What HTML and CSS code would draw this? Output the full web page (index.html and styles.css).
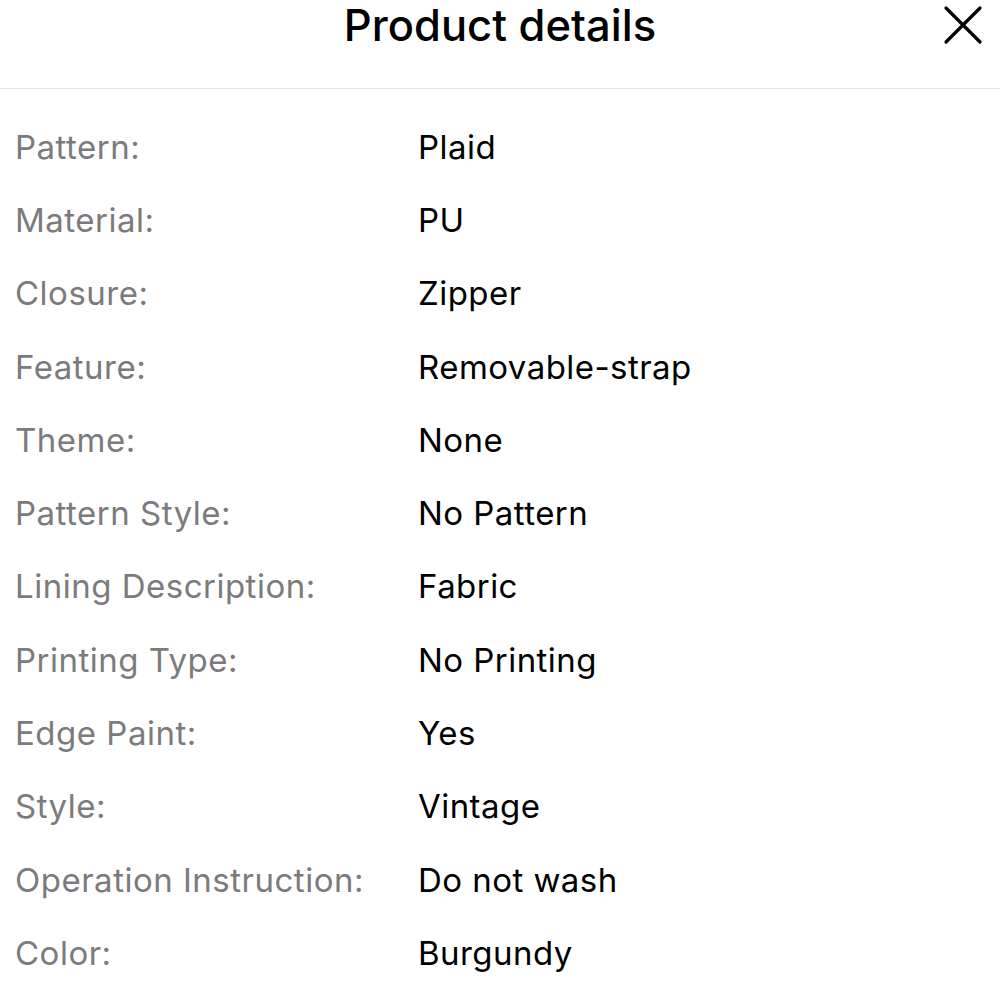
FILE: index.html
```html
<!DOCTYPE html>
<html>
<head>
<meta charset="utf-8">
<link rel="stylesheet" href="styles.css">
</head>
<body>
<div class="sheet">
  <header class="header">
    <h1 class="title">Product details</h1>
    <button class="close" aria-label="Close">
      <svg width="40" height="40" viewBox="0 0 40 40"><path d="M3 3 L37 37 M37 3 L3 37" stroke="#000" stroke-width="3.2" stroke-linecap="round" fill="none"/></svg>
    </button>
  </header>
  <dl class="details">
    <div class="row"><dt>Pattern:</dt><dd>Plaid</dd></div>
    <div class="row"><dt>Material:</dt><dd>PU</dd></div>
    <div class="row"><dt>Closure:</dt><dd>Zipper</dd></div>
    <div class="row"><dt>Feature:</dt><dd>Removable-strap</dd></div>
    <div class="row"><dt>Theme:</dt><dd>None</dd></div>
    <div class="row"><dt>Pattern Style:</dt><dd>No Pattern</dd></div>
    <div class="row"><dt>Lining Description:</dt><dd>Fabric</dd></div>
    <div class="row"><dt>Printing Type:</dt><dd>No Printing</dd></div>
    <div class="row"><dt>Edge Paint:</dt><dd>Yes</dd></div>
    <div class="row"><dt>Style:</dt><dd>Vintage</dd></div>
    <div class="row"><dt>Operation Instruction:</dt><dd>Do not wash</dd></div>
    <div class="row"><dt>Color:</dt><dd>Burgundy</dd></div>
  </dl>
</div>
</body>
</html>
```
FILE: styles.css
```css
html, body {
  margin: 0;
  padding: 0;
  background: #fff;
}
body {
  font-family: Inter, "Noto Sans", "Liberation Sans", sans-serif;
  color: #000;
}
.header {
  position: relative;
  height: 88px;
  border-bottom: 1px solid #e3e3e3;
  display: flex;
  align-items: center;
  justify-content: center;
}
.title {
  margin: 0 0 38px 0;
  font-size: 43.5px;
  font-weight: 500;
  letter-spacing: 0;
  line-height: 50px;
}
.close {
  position: absolute;
  right: 17px;
  top: 5px;
  width: 40px;
  height: 40px;
  padding: 0;
  border: 0;
  background: none;
  display: flex;
}
.details {
  margin: 0;
  padding: 21px 0 0 15px;
}
.row {
  display: grid;
  grid-template-columns: 403px 1fr;
  height: 73.3px;
  align-items: center;
}
.row dt {
  color: #7b7b7b;
  font-size: 33px;
  letter-spacing: 0.5px;
}
.row dd {
  margin: 0;
  font-size: 33px;
  letter-spacing: 0.45px;
}
```
